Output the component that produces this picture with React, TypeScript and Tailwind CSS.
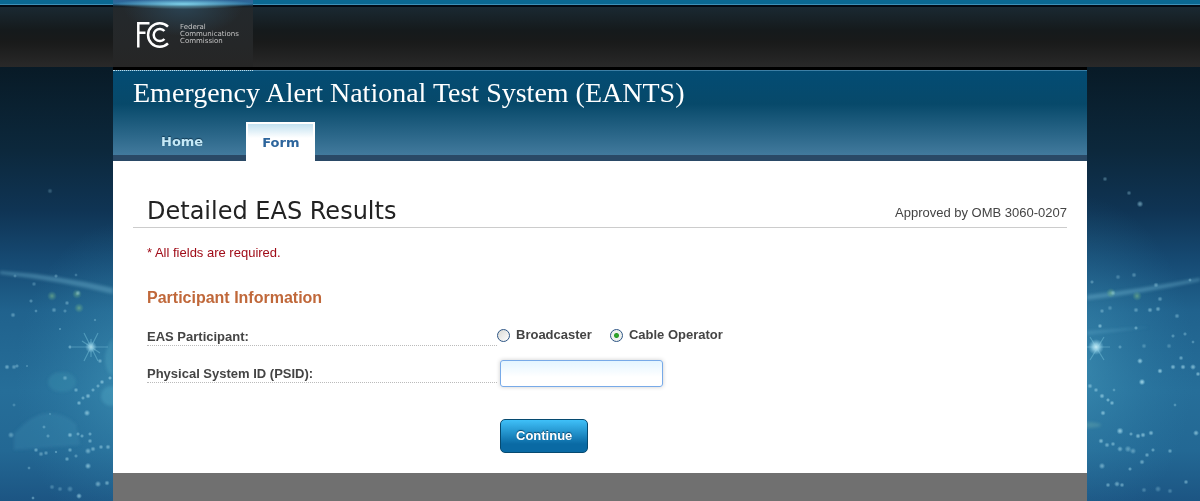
import { useState } from "react";

const STARS: [number, number, number, number][] = [
    [50, 191, 2, 0.25], [15, 276, 1.5, 0.3], [34, 284, 1.8, 0.3], [56, 276, 1.6, 0.35], [76, 275, 1.4, 0.3],
    [13, 315, 2, 0.4], [31, 301, 1.6, 0.4], [36, 311, 1.4, 0.4], [54, 310, 2, 0.4], [65, 311, 1.6, 0.35],
    [67, 303, 1.8, 0.4], [78, 293, 2, 0.4], [95, 320, 1.2, 0.4], [60, 329, 1, 0.5], [70, 347, 1.6, 0.55],
    [17, 366, 1.6, 0.4], [7, 367, 2, 0.5], [14, 367, 2, 0.4], [27, 366, 1, 0.4], [100, 361, 1.8, 0.5],
    [65, 378, 2, 0.4], [110, 378, 1.6, 0.6], [102, 382, 1.8, 0.6], [98, 386, 1.6, 0.5], [93, 390, 1.6, 0.5],
    [88, 396, 2, 0.6], [83, 398, 1.6, 0.5], [76, 390, 1.8, 0.5], [79, 403, 1.8, 0.6], [87, 413, 2.4, 0.6],
    [14, 405, 1.5, 0.3], [50, 414, 1.2, 0.3], [44, 427, 1.5, 0.4], [11, 435, 2.4, 0.4], [48, 436, 1.6, 0.4],
    [70, 435, 2, 0.6], [78, 434, 1.6, 0.5], [82, 436, 1.6, 0.5], [90, 434, 1.6, 0.5], [90, 441, 1.8, 0.5],
    [36, 450, 1.8, 0.5], [41, 454, 2, 0.4], [46, 453, 1.8, 0.4], [56, 452, 1.2, 0.5], [70, 450, 1.8, 0.5],
    [67, 459, 1.8, 0.5], [76, 456, 1.6, 0.4], [88, 451, 2.4, 0.5], [93, 449, 2, 0.5], [101, 447, 1.8, 0.5],
    [108, 447, 2, 0.5], [88, 466, 2.4, 0.6], [29, 468, 1.4, 0.4], [98, 484, 2.4, 0.5], [107, 483, 2, 0.5],
    [52, 487, 2, 0.3], [60, 489, 2, 0.3], [70, 489, 2.4, 0.3], [79, 496, 2.2, 0.6], [33, 498, 1.4, 0.5],
    [1105, 179, 1.8, 0.35], [1129, 193, 1.8, 0.35], [1140, 204, 2.4, 0.5], [1092, 282, 1.6, 0.4], [1118, 277, 2, 0.3],
    [1134, 275, 2, 0.35], [1156, 285, 2, 0.4], [1190, 280, 1.5, 0.4], [1113, 293, 2, 0.4], [1160, 299, 2, 0.4],
    [1102, 311, 1.8, 0.4], [1110, 308, 2, 0.3], [1136, 310, 2, 0.4], [1150, 310, 2, 0.5], [1158, 309, 2, 0.5],
    [1177, 316, 2, 0.4], [1100, 326, 1.8, 0.6], [1136, 328, 1.6, 0.5], [1173, 336, 1.6, 0.4], [1185, 334, 1.6, 0.4],
    [1120, 347, 1.6, 0.4], [1144, 346, 2, 0.3], [1169, 346, 2, 0.3], [1193, 342, 1.4, 0.4], [1140, 361, 2.2, 0.7],
    [1160, 371, 2, 0.7], [1142, 382, 2.4, 0.8], [1181, 358, 1.8, 0.5], [1173, 367, 2, 0.6], [1183, 367, 2, 0.6],
    [1193, 367, 2.2, 0.6], [1198, 374, 1.8, 0.6], [1090, 386, 2, 0.5], [1096, 390, 1.8, 0.5], [1102, 396, 2, 0.6],
    [1108, 400, 1.6, 0.6], [1112, 403, 1.8, 0.6], [1103, 413, 2, 0.6], [1114, 390, 1.4, 0.4], [1175, 405, 1.4, 0.4],
    [1120, 431, 2.6, 0.7], [1131, 434, 1.6, 0.5], [1138, 436, 2, 0.6], [1143, 435, 2, 0.6], [1151, 433, 2, 0.6],
    [1196, 433, 2.2, 0.6], [1101, 441, 2, 0.6], [1107, 445, 2, 0.5], [1113, 444, 1.8, 0.5], [1120, 449, 2.2, 0.5],
    [1128, 449, 2.6, 0.4], [1133, 451, 2.4, 0.4], [1147, 455, 1.8, 0.5], [1153, 450, 1.6, 0.5], [1170, 451, 1.8, 0.5],
    [1142, 462, 2, 0.5], [1102, 466, 2.4, 0.5], [1130, 469, 1.6, 0.5], [1186, 482, 1.8, 0.5], [1108, 485, 1.8, 0.5],
    [1117, 484, 2.2, 0.5], [1122, 485, 1.8, 0.5], [1144, 490, 2, 0.3], [1158, 489, 2.4, 0.3], [1170, 491, 2, 0.3],
];

const SPARKS: [number, number][] = [[52, 296], [79, 308], [77, 294], [1111, 293], [1137, 296]];

function Backdrop() {
    return (
        <svg className="absolute top-0 left-0 w-full h-full -z-10" viewBox="0 0 1200 501" preserveAspectRatio="xMidYMin slice" aria-hidden="true">
            <defs>
                <linearGradient id="sky" x1="0" y1="0" x2="0" y2="1">
                    <stop offset="0.13" stopColor="#081a26" />
                    <stop offset="0.3" stopColor="#0c283c" />
                    <stop offset="0.42" stopColor="#0f3454" />
                    <stop offset="0.52" stopColor="#164a73" />
                    <stop offset="0.62" stopColor="#20628d" />
                    <stop offset="0.78" stopColor="#266e99" />
                    <stop offset="0.9" stopColor="#236894" />
                    <stop offset="1" stopColor="#1c5583" />
                </linearGradient>
                <radialGradient id="glow">
                    <stop offset="0" stopColor="#4ba3c3" stopOpacity="0.5" />
                    <stop offset="1" stopColor="#2f83ac" stopOpacity="0" />
                </radialGradient>
                <radialGradient id="star">
                    <stop offset="0" stopColor="#c4ecf5" />
                    <stop offset="0.4" stopColor="#9ad4e8" stopOpacity="0.85" />
                    <stop offset="1" stopColor="#7cc0dc" stopOpacity="0" />
                </radialGradient>
                <radialGradient id="spark">
                    <stop offset="0" stopColor="#7fb98a" stopOpacity="0.65" />
                    <stop offset="1" stopColor="#5fa98a" stopOpacity="0" />
                </radialGradient>
                <filter id="soft">
                    <feGaussianBlur stdDeviation="1.6" />
                </filter>
            </defs>
            <rect width="1200" height="501" fill="url(#sky)" />
            <ellipse cx="130" cy="380" rx="115" ry="160" fill="url(#glow)" />
            <ellipse cx="1075" cy="365" rx="120" ry="170" fill="url(#glow)" />
            <g filter="url(#soft)">
                <path d="M0 271 Q60 275 113 288 L113 294 Q60 281 0 274Z" fill="#6ab0cc" opacity="0.45" />
                <path d="M1087 295 Q1140 289 1200 278 L1200 281 Q1140 294 1087 300Z" fill="#6ab0cc" opacity="0.45" />
                <path d="M1087 331 L1150 327 L1087 335Z" fill="#5aa3c4" opacity="0.4" />
                <path d="M14 434 Q45 398 76 424 L80 445 L14 450Z" fill="#3f8fb2" opacity="0.3" />
                <ellipse cx="62" cy="382" rx="14" ry="10" fill="#3f98b4" opacity="0.3" />
                <circle cx="111" cy="396" r="10" fill="#55adc8" opacity="0.35" />
                <path d="M113 338 Q100 355 108 372 L113 376Z" fill="#55adc8" opacity="0.3" />
                <ellipse cx="1087" cy="425" rx="14" ry="3" fill="#7fb9b0" opacity="0.3" />
            </g>
            {SPARKS.map(([x, y]) => <circle key={x} cx={x} cy={y} r="5" fill="url(#spark)" />)}
            <g stroke="#7cc6de" strokeWidth="1.2" opacity="0.45">
                <path d="M72 347H108M84 333L98 361M98 333L84 361M91 339V357M82 341L100 353" />
                <path d="M1087 347H1110M1090 337L1104 360M1104 337L1090 360" />
            </g>
            <circle cx="91" cy="347" r="6" fill="url(#star)" opacity="0.8" />
            <circle cx="1096" cy="347" r="8" fill="url(#star)" />
            {STARS.map(([x, y, r, o]) => <circle key={`${x}-${y}`} cx={x} cy={y} r={r * 1.4} fill="url(#star)" opacity={o} />)}
        </svg>
    );
}

function Logo() {
    return (
        <a href="#" className="flex items-center w-[140px] h-[67px] pl-6 pt-1 pb-[2px] gap-[11px] bg-[radial-gradient(ellipse_70px_5px_at_50%_4px,#7fd0e8,transparent),linear-gradient(#2f6397_0px,#2a6f9d_4px,#14202a_6px,transparent_8px),radial-gradient(ellipse_60px_30px_at_50%_6px,#2b4454,transparent),linear-gradient(#23292d,#262626)]">
            <svg className="w-8 h-[26px] shrink-0" viewBox="0 0 32 26" fill="none" stroke="#fff" strokeWidth="2.5" aria-hidden="true">
                <path d="M1.3 25.4V1.3H12.5M1.3 10.8H8.5" />
                <path d="M31 4.7A11.7 11.7 0 1 0 31 21.3" />
                <path d="M27.4 9A6.1 6.1 0 1 0 27.4 17" />
            </svg>
            <span className="text-[7px] leading-[7px] text-[#c4c4c4] font-['DejaVu_Sans',sans-serif]">Federal<br />Communications<br />Commission</span>
        </a>
    );
}

function NavTabs() {
    return (
        <nav className="flex gap-[27px] pl-8 mt-[7px] text-[13px] leading-4 font-bold font-['DejaVu_Sans',sans-serif]">
            <a href="#" className="h-[39px] px-4 pt-3 text-[#c5e9f7] [text-shadow:0_-1px_1px_#123a55]">Home</a>
            <a href="#" className="h-[39px] px-[14px] pt-[11px] border-2 border-b-0 border-white text-[#2d659c] bg-[linear-gradient(#c2e1f0,#fff_14px)]">Form</a>
        </nav>
    );
}

const RADIO = "appearance-none size-[13px] rounded-full border border-[#2d5584] bg-[linear-gradient(135deg,#d9d9d4,#fff)] checked:bg-[radial-gradient(circle,#2fae2a_0px,#2a9a26_2px,#eef1ee_3px)]";

function ParticipantForm() {
    const [participant, setParticipant] = useState("Cable Operator");
    const label = "h-[18px] leading-[17px] border-b border-dotted border-[#bbb]";
    return (
        <form className="px-[14px] text-[13px] text-[#444] font-bold" onSubmit={(e) => e.preventDefault()}>
            <p className="mt-[17px] leading-4 font-normal text-[#a00c18]">* All fields are required.</p>
            <h3 className="mt-[27px] text-base leading-5 text-[#c0683a]">Participant Information</h3>
            <div className="grid grid-cols-[350px_1fr] items-start mt-5" role="radiogroup" aria-labelledby="participant">
                <div id="participant" className={label}>EAS Participant:</div>
                <div className="flex gap-[18px] leading-[14px]">
                    {["Broadcaster", "Cable Operator"].map((name) => (
                        <label key={name} className="flex items-center gap-[6px]">
                            <input type="radio" name="participant" className={RADIO} checked={participant === name} onChange={() => setParticipant(name)} />
                            {name}
                        </label>
                    ))}
                </div>
            </div>
            <div className="grid grid-cols-[350px_1fr] items-center mt-[14px]">
                <label htmlFor="psid" className={label}>Physical System ID (PSID):</label>
                <input id="psid" type="text" className="w-[163px] h-[27px] ml-[3px] px-1 rounded-[3px] border border-[#78aae8] bg-[linear-gradient(#e4f5ff,#fff_16px)] shadow-[0_0_4px_#ccc] outline-none font-normal" />
            </div>
            <button type="submit" className="block ml-[353px] mt-8 h-[34px] px-[15px] rounded-[5px] border border-[#064a70] text-white bg-[linear-gradient(#3fc0f8,#0a6aa4_75%)] [text-shadow:0_-1px_1px_#0a4468]">Continue</button>
        </form>
    );
}

export default function App() {
    return (
        <div className="relative isolate min-h-screen flex flex-col font-['Liberation_Sans',Arial,sans-serif]">
            <Backdrop />
            <header className="bg-[linear-gradient(#0a6892_0px,#0a6892_4px,#3d90b8_4px,#3d90b8_5px,#020a14_5px,#020a14_7px,#1a2932_7px,#151a1c_30px,#191a1a_42px,#292929_67px)]">
                <div className="max-w-[974px] mx-auto">
                    <Logo />
                </div>
            </header>
            <div className="w-full max-w-[974px] mx-auto grow flex flex-col">
                <div className="border-t-3 border-black bg-[linear-gradient(#034c74,#07496a_34px,#427a9d_85px,#2a4966_85px)]">
                    <div className="border-t border-[#3d7fa5]">
                        <div className="w-[140px] -mt-px border-t border-dotted border-[#b8dcea]"></div>
                        <h1 className="pl-5 text-[28px] leading-[44px] text-white font-['Liberation_Serif',serif]">Emergency Alert National Test System (EANTS)</h1>
                        <NavTabs />
                    </div>
                </div>
                <main className="bg-white px-5 pt-[34px] pb-5">
                    <div className="flex items-end justify-between pl-[14px] border-b border-[#ccc]">
                        <h2 className="text-2xl leading-8 text-[#222] font-['DejaVu_Sans',sans-serif]">Detailed EAS Results</h2>
                        <p className="text-[13px] leading-4 pb-[6px] text-[#444]">Approved by OMB 3060-0207</p>
                    </div>
                    <ParticipantForm />
                </main>
                <footer className="grow bg-[#707070]"></footer>
            </div>
        </div>
    );
}
